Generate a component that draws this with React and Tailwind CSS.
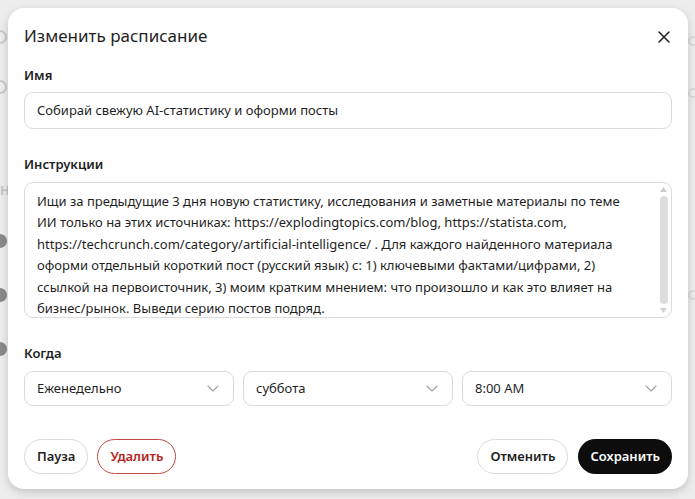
import React from "react";

const font = { fontFamily: '"Noto Sans", "Open Sans", sans-serif' };

function Chevron() {
  return (
    <svg width="12" height="7" viewBox="0 0 12 7" fill="none" className="shrink-0">
      <path d="M1 1l5 5 5-5" stroke="#a3a3a3" strokeWidth="1.1" strokeLinecap="round" strokeLinejoin="round" />
    </svg>
  );
}

function Select({ value }) {
  return (
    <div className="flex-1 h-[35px] rounded-[9px] border border-[#dcdcdc] flex items-center justify-between pl-[12px] pr-[14px] text-[13px] text-[#1f1f1f]">
      <span>{value}</span>
      <Chevron />
    </div>
  );
}

export default function App() {
  const lines = [
    "Ищи за предыдущие 3 дня новую статистику, исследования и заметные материалы по теме",
    "ИИ только на этих источниках: https://explodingtopics.com/blog, https://statista.com,",
    "https://techcrunch.com/category/artificial-intelligence/ . Для каждого найденного материала",
    "оформи отдельный короткий пост (русский язык) с: 1) ключевыми фактами/цифрами, 2)",
    "ссылкой на первоисточник, 3) моим кратким мнением: что произошло и как это влияет на",
    "бизнес/рынок. Выведи серию постов подряд.",
  ];
  return (
    <div className="relative w-[695px] h-[499px] bg-[#ededed] overflow-hidden p-[8px]" style={font}>
      {/* faint background content behind modal */}
      <div className="absolute left-[-7px] top-[30px] w-[14px] h-[14px] rounded-full border-2 border-[#c9c9c9]" />
      <div className="absolute left-[-7px] top-[80px] w-[14px] h-[14px] rounded-full border-2 border-[#c9c9c9]" />
      <div className="absolute left-[0px] top-[181px] text-[13px] text-[#c4c4c4] font-bold">Н</div>
      <div className="absolute left-[-7px] top-[234px] w-[14px] h-[14px] rounded-full bg-[#8a8a8a]" />
      <div className="absolute left-[-7px] top-[288px] w-[14px] h-[14px] rounded-full bg-[#8a8a8a]" />
      <div className="absolute left-[-7px] top-[342px] w-[14px] h-[14px] rounded-full bg-[#8a8a8a]" />
      <div className="absolute left-[688px] top-[36px] w-[10px] h-[10px] rounded-full border-2 border-[#dadada]" />
      <div className="absolute left-[688px] top-[88px] w-[10px] h-[10px] rounded-full border-2 border-[#dadada]" />
      <div className="absolute left-[688px] top-[290px] w-[10px] h-[10px] rounded-full border-2 border-[#dadada]" />

      <div className="relative w-[680px] h-[481px] bg-white rounded-[16px] shadow-[0_3px_8px_rgba(0,0,0,0.18)] px-[16px] pt-[14px] flex flex-col text-[#1f1f1f]">
        <div className="flex items-center justify-between h-[28px]">
          <h1 className="text-[17px] font-normal text-[#1f1f1f] leading-[28px]">Изменить расписание</h1>
          <svg width="12" height="12" viewBox="0 0 12 12" className="mr-[2px] mt-[1px]">
            <path d="M1 1l10 10M11 1L1 11" stroke="#1f1f1f" strokeWidth="1.5" strokeLinecap="round" />
          </svg>
        </div>

        <div className="mt-[15px] text-[13px] font-semibold leading-[20px]">Имя</div>
        <div className="mt-[7px] h-[37px] rounded-[9px] border border-[#dcdcdc] flex items-center px-[12px] text-[13px]">
          Собирай свежую AI-статистику и оформи посты
        </div>

        <div className="mt-[25px] text-[13px] font-semibold leading-[20px]">Инструкции</div>
        <div className="relative mt-[8px] h-[136px] rounded-[9px] border border-[#dcdcdc] pl-[12px] pr-[20px] pt-[8px] overflow-hidden text-[13px] leading-[21.4px]">
          {lines.map((l, i) => (
            <div key={i} className="whitespace-nowrap">{l}</div>
          ))}
          {/* scrollbar */}
          <div className="absolute right-[3px] top-[4px] bottom-[4px] w-[9px] flex flex-col items-center justify-between">
            <svg width="7" height="5" viewBox="0 0 7 5"><path d="M0 5L3.5 0 7 5z" fill="#cfcfcf" /></svg>
            <div className="flex-1 w-[8px] my-[4px] rounded-full bg-[#dddddd]" />
            <svg width="7" height="5" viewBox="0 0 7 5"><path d="M0 0L3.5 5 7 0z" fill="#cfcfcf" /></svg>
          </div>
        </div>

        <div className="mt-[25px] text-[13px] font-semibold leading-[20px]">Когда</div>
        <div className="mt-[8px] flex gap-[9px]">
          <Select value="Еженедельно" />
          <Select value="суббота" />
          <Select value="8:00 AM" />
        </div>

        <div className="mt-[33px] flex items-center justify-between">
          <div className="flex gap-[9px]">
            <button className="h-[35px] px-[12px] rounded-full border border-[#dcdcdc] text-[13px] font-semibold text-[#1f1f1f]">Пауза</button>
            <button className="h-[35px] px-[12px] rounded-full border border-[#c24a47] text-[13px] font-semibold text-[#b3261e]">Удалить</button>
          </div>
          <div className="flex gap-[10px]">
            <button className="h-[35px] px-[12px] rounded-full border border-[#dcdcdc] text-[13px] font-semibold text-[#1f1f1f]">Отменить</button>
            <button className="h-[35px] px-[12px] rounded-full bg-[#0d0d0d] text-[13px] font-semibold text-white">Сохранить</button>
          </div>
        </div>
      </div>
    </div>
  );
}
